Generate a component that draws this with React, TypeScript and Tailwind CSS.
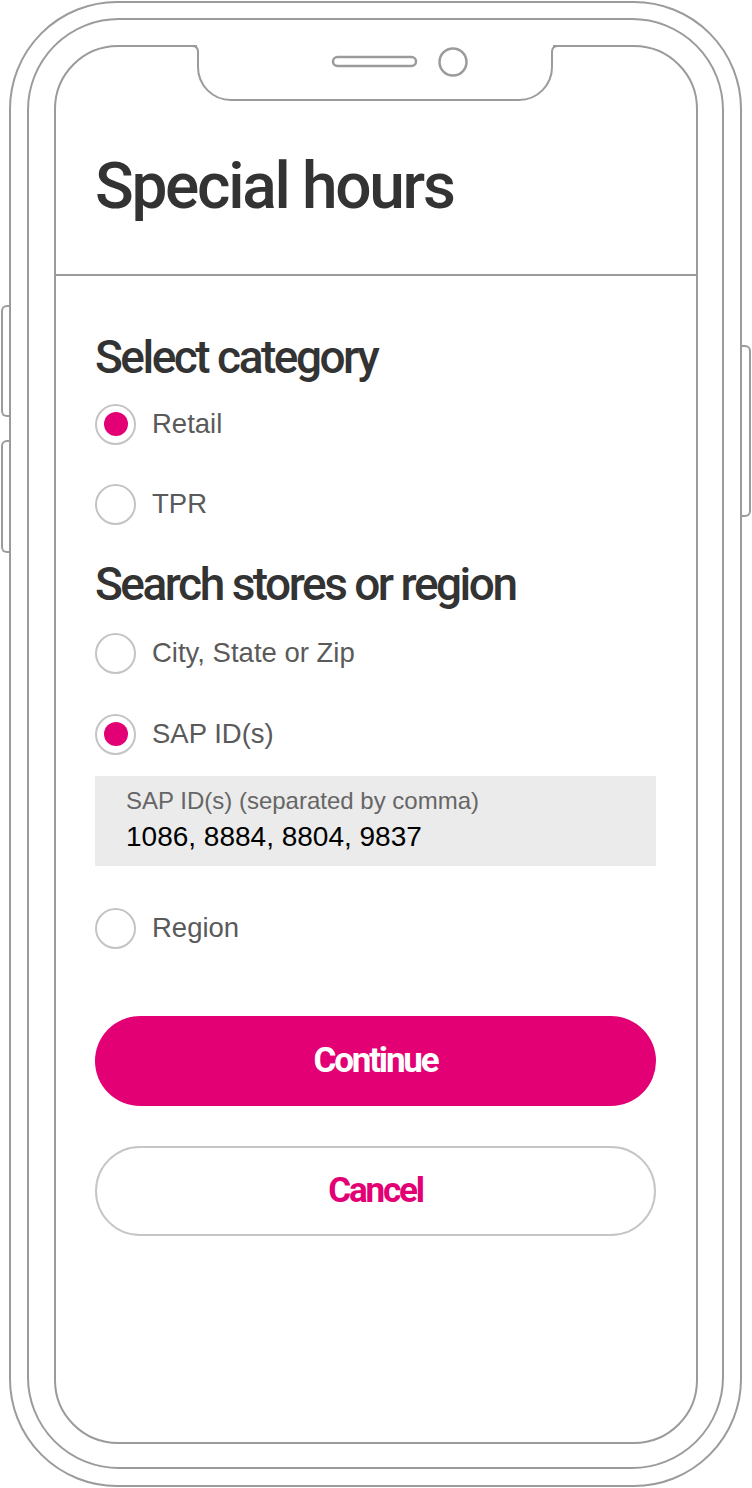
import React from 'react'

const heading = "font-['Roboto',sans-serif] font-medium"
const condensed = "font-['Roboto',sans-serif] font-bold"
const sans = "font-['Liberation_Sans','Arial',sans-serif]"

function Radio({ label, checked }: { label: string; checked?: boolean }) {
  return (
    <div className="flex h-[80px] items-center gap-[16px]">
      <span className="flex h-[41px] w-[41px] shrink-0 items-center justify-center rounded-full border-2 border-[#c4c4c4]">
        {checked && <span className="h-[24px] w-[24px] rounded-full bg-[#e20074]" />}
      </span>
      <span className={`${sans} text-[27.5px] leading-none text-[#5a5a5a]`}>{label}</span>
    </div>
  )
}

export default function App() {
  return (
    <div className="relative h-[1488px] w-[752px] bg-white">
      {/* side buttons */}
      <div className="absolute left-[1px] top-[305px] h-[112px] w-[10px] rounded-l-[6px] border-2 border-r-0 border-[#9b9b9b]" />
      <div className="absolute left-[1px] top-[440px] h-[113px] w-[10px] rounded-l-[6px] border-2 border-r-0 border-[#9b9b9b]" />
      <div className="absolute left-[741px] top-[345px] h-[172px] w-[10px] rounded-r-[6px] border-2 border-l-0 border-[#9b9b9b]" />

      {/* phone body */}
      <div className="ml-[9px] pt-[1px]">
        <div className="h-[1486px] w-[733px] rounded-[108px] border-2 border-[#9b9b9b] px-[16px] pb-[16px] pt-[15px]">
          <div className="h-full w-full rounded-[92px] border-2 border-[#9b9b9b] pb-[23px] pl-[25px] pr-[24px] pt-[25px]">
            {/* screen */}
            <div className="relative flex h-full w-full flex-col rounded-[64px] border-2 border-[#9b9b9b] bg-white">
              <svg
                className="absolute left-[133px] top-[-2px]"
                width="372"
                height="60"
                viewBox="0 0 372 60"
                fill="none"
              >
                <rect x="8" y="-1" width="356" height="5" fill="#fff" />
                <path
                  d="M0 1 H3 Q9 1 9 7 V22 A33 33 0 0 0 42 55 H330 A33 33 0 0 0 363 22 V7 Q363 1 369 1 H372"
                  stroke="#9b9b9b"
                  strokeWidth="2"
                />
                <rect x="144" y="12" width="83" height="9" rx="4.5" stroke="#9b9b9b" strokeWidth="2.5" />
                <circle cx="264" cy="17" r="13.5" stroke="#9b9b9b" strokeWidth="2.5" />
              </svg>

              {/* header */}
              <div className="h-[229px] shrink-0 border-b-2 border-[#9b9b9b] px-[39px] pt-[108px]">
                <h1 className={`${heading} text-[64px] leading-none tracking-[-2.3px] text-[#333333]`}>Special hours</h1>
              </div>

              {/* body */}
              <div className="flex flex-col pl-[39px] pr-[40px]">
                <h2 className={`${heading} mt-[58px] text-[46px] leading-none tracking-[-2.5px] text-[#333333]`}>
                  Select category
                </h2>
                <div className="mt-[4px]">
                  <Radio label="Retail" checked />
                  <Radio label="TPR" />
                </div>

                <h2 className={`${heading} mt-[17px] text-[46px] leading-none tracking-[-2.5px] text-[#333333]`}>
                  Search stores or region
                </h2>
                <div className="mt-[6px]">
                  <Radio label="City, State or Zip" />
                  <div className="mt-[1px]">
                    <Radio label="SAP ID(s)" checked />
                  </div>
                </div>

                <div className="mt-[2px] h-[90px] bg-[#ebebeb] pl-[31px] pt-[13px]">
                  <div className={`${sans} text-[24px] leading-none text-[#666666]`}>SAP ID(s) (separated by comma)</div>
                  <div className={`${sans} mt-[10px] text-[28px] leading-none text-black`}>1086, 8884, 8804, 9837</div>
                </div>

                <div className="mt-[22px]">
                  <Radio label="Region" />
                </div>

                <button
                  className={`${condensed} mt-[48px] h-[90px] w-full rounded-full bg-[#e20074] text-[35px] tracking-[-2.2px] text-white`}
                >
                  Continue
                </button>
                <button
                  className={`${condensed} mt-[40px] h-[90px] w-full rounded-full border-2 border-[#c6c6c6] bg-white text-[35px] tracking-[-2.2px] text-[#e20074]`}
                >
                  Cancel
                </button>
              </div>
            </div>
          </div>
        </div>
      </div>
    </div>
  )
}
